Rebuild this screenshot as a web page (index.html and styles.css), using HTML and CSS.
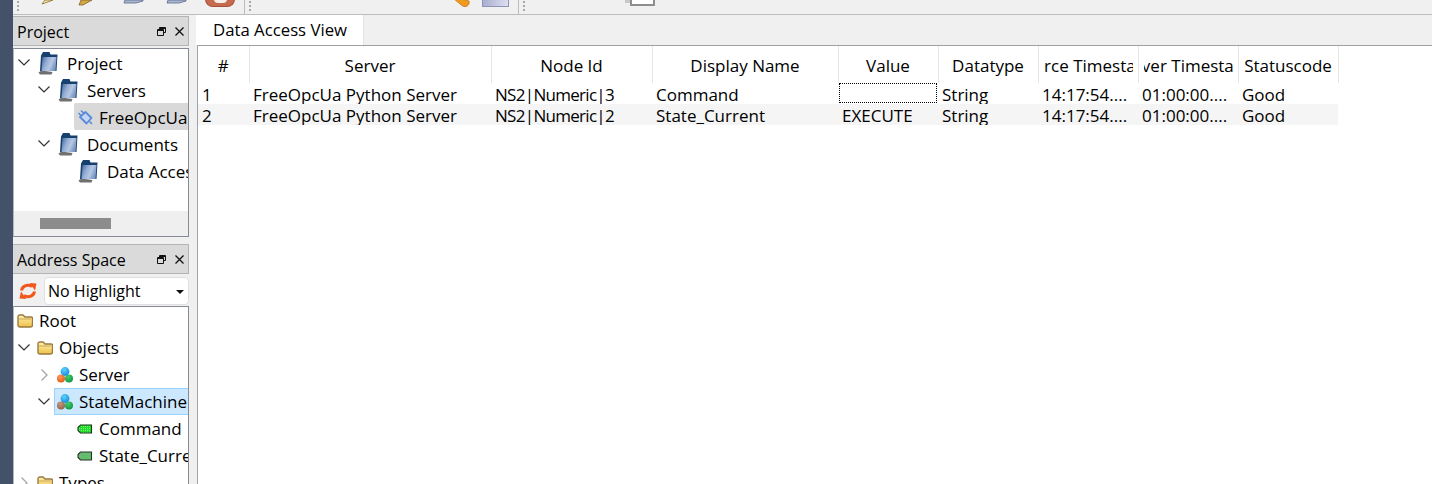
FILE: index.html
```html
<!DOCTYPE html>
<html lang="en">
<head>
    <meta charset="UTF-8">
    <title>Data Access View</title>
    <link rel="stylesheet" href="styles.css">
</head>
<body>
    <svg class="defs" width="0" height="0">
        <defs>
            <linearGradient id="bookFill" x1="0" y1="0" x2="1" y2="0.4">
                <stop offset="0" stop-color="#3f6396"/>
                <stop offset="0.4" stop-color="#92acd3"/>
                <stop offset="0.7" stop-color="#b6c8e4"/>
                <stop offset="1" stop-color="#7d99c4"/>
            </linearGradient>
            <linearGradient id="folderFill" x1="0" y1="0" x2="0" y2="1">
                <stop offset="0" stop-color="#fff3b0"/>
                <stop offset="1" stop-color="#eec04a"/>
            </linearGradient>
            <radialGradient id="ballBlue" cx="0.4" cy="0.3" r="0.8">
                <stop offset="0" stop-color="#5fd0ff"/>
                <stop offset="1" stop-color="#0a86d8"/>
            </radialGradient>
            <radialGradient id="ballOrange" cx="0.4" cy="0.3" r="0.8">
                <stop offset="0" stop-color="#ff9a55"/>
                <stop offset="1" stop-color="#e2500f"/>
            </radialGradient>
            <radialGradient id="ballGreen" cx="0.4" cy="0.3" r="0.8">
                <stop offset="0" stop-color="#3fd070"/>
                <stop offset="1" stop-color="#0c8f3c"/>
            </radialGradient>
            <radialGradient id="ballBrown" cx="0.4" cy="0.3" r="0.8">
                <stop offset="0" stop-color="#c49680"/>
                <stop offset="1" stop-color="#8f5e48"/>
            </radialGradient>
            <pattern id="checkGreen" width="2" height="2" patternUnits="userSpaceOnUse">
                <rect width="2" height="2" fill="#1fdc28"/>
                <rect width="1" height="1" fill="#7cf07f"/>
            </pattern>
            <pattern id="checkGrey" width="2" height="2" patternUnits="userSpaceOnUse">
                <rect width="2" height="2" fill="#59c866"/>
                <rect width="1" height="1" fill="#8d968e"/>
            </pattern>
            <symbol id="book" viewBox="0 0 20 24">
                <path d="M0.500 21.500l3-2 11 1.500-1 2.500H2z" fill="#333" opacity="0.7"/>
                <path d="M3 4.500L5 1h6.500l1 2.500H19.500L18.500 20H2z" fill="#17406f"/>
                <path d="M4.500 6h14L17.500 20H3.500z" fill="url(#bookFill)"/>
            </symbol>
            <symbol id="plug" viewBox="0 0 16 16">
                <path d="M8.500 3L14.500 9 9.500 14.500 3 8z" fill="#c3d6f6" stroke="#5a8ada" stroke-width="1.800" stroke-linejoin="round"/>
                <path d="M7 4.500L4 1.500M4.500 7L1.500 4M12.500 12.500L15 15" stroke="#5a8ada" stroke-width="1.600" fill="none"/>
            </symbol>
            <symbol id="folder" viewBox="0 0 16 14">
                <path d="M1 3q0-2 2-2h3l2 2h6q1.500 0 1.500 1.500V11q0 2-2 2H3q-2 0-2-2z" fill="url(#folderFill)" stroke="#9b7a3f" stroke-width="1.400"/>
                <path d="M2 5h12" stroke="#c9a556" stroke-width="1"/>
            </symbol>
            <symbol id="cluster" viewBox="0 0 16 16">
                <circle cx="4" cy="11.500" r="4" fill="url(#ballOrange)"/>
                <circle cx="12" cy="11.500" r="4" fill="url(#ballGreen)"/>
                <circle cx="8" cy="4.500" r="4.400" fill="url(#ballBlue)"/>
            </symbol>
            <symbol id="clusterDim" viewBox="0 0 16 16">
                <circle cx="4" cy="11.500" r="4" fill="url(#ballBrown)"/>
                <circle cx="12" cy="11.500" r="4" fill="url(#ballGreen)"/>
                <circle cx="8" cy="4.500" r="4.400" fill="url(#ballBlue)"/>
            </symbol>
            <symbol id="tag" viewBox="0 0 16 10">
                <path d="M1 3.500L3.500 1h11v8h-11L1 6.500z" fill="url(#checkGreen)" stroke="#17391a" stroke-width="1.100"/>
            </symbol>
            <symbol id="tagDim" viewBox="0 0 16 10">
                <path d="M1 3.500L3.500 1h11v8h-11L1 6.500z" fill="url(#checkGrey)" stroke="#2b332c" stroke-width="1.100"/>
            </symbol>
            <symbol id="chevDown" viewBox="0 0 12 7">
                <path d="M0.500 0.500L6 6l5.500-5.500" fill="none" stroke="#333" stroke-width="1.200"/>
            </symbol>
            <symbol id="chevRight" viewBox="0 0 7 12">
                <path d="M0.500 0.500L6 6l-5.500 5.500" fill="none" stroke="#a6a6a6" stroke-width="1.300"/>
            </symbol>
            <symbol id="floatBtn" viewBox="0 0 9 9">
                <path d="M2.500 2.500V0.500h6v5h-2M0.500 2.500h6v6h-6z" fill="none" stroke="#111" stroke-width="1"/>
                <path d="M0.500 3.500h6M2.500 1.500h6" stroke="#111" stroke-width="1"/>
            </symbol>
            <symbol id="closeBtn" viewBox="0 0 9 9">
                <path d="M0.500 0.500l8 8M8.500 0.500l-8 8" stroke="#111" stroke-width="1.300"/>
            </symbol>
        </defs>
    </svg>

    <div class="edge"></div>
    <div class="app">
        <div class="toolbar">
            <span class="grip grip-first"></span>
            <svg class="tool tool-pen" viewBox="0 0 11 4"><path d="M0 4l3-1 8-3H3z" fill="#f6e7b4" stroke="#8a6a2a" stroke-width="0.800"/></svg>
            <svg class="tool tool-pen2" viewBox="0 0 13 5"><path d="M0 5h4l9-5H2z" fill="#d6a73e" stroke="#7b6231" stroke-width="0.800"/></svg>
            <svg class="tool tool-doc" viewBox="0 0 19 3"><path d="M0 3h12l7-2V0H1z" fill="#a9b6d0" stroke="#5a6a8e" stroke-width="0.800"/></svg>
            <svg class="tool tool-doc2" viewBox="0 0 19 3"><path d="M0 3h12l7-2V0H1z" fill="#a9b6d0" stroke="#5a6a8e" stroke-width="0.800"/></svg>
            <span class="tool-stop"></span>
            <span class="tool-sep"></span>
            <span class="grip"></span>
            <svg class="tool tool-tag" viewBox="0 0 16 8"><path d="M0 0h8l7 2q1 4-3 5.500-2.500 0.500-4-1z" fill="#f09a1e" stroke="#c9751a" stroke-width="0.800"/></svg>
            <span class="tool-box"></span>
            <span class="tool-sep tool-sep-wide"></span>
            <span class="grip"></span>
            <span class="tool-page"></span>
        </div>

        <div class="workspace">
            <div class="docks">
                <section class="dock dock-project">
                    <header class="dock-title">
                        <span class="dock-name">Project</span>
                        <svg class="dock-btn"><use href="#floatBtn"/></svg>
                        <svg class="dock-btn"><use href="#closeBtn"/></svg>
                    </header>
                    <div class="tree tree-project">
                        <div class="tree-rows">
                            <div class="row">
                                <span class="expander"><svg class="chev"><use href="#chevDown"/></svg></span>
                                <span class="item item-book"><svg class="ico-book"><use href="#book"/></svg>Project</span>
                            </div>
                            <div class="row level-1">
                                <span class="expander"><svg class="chev"><use href="#chevDown"/></svg></span>
                                <span class="item item-book"><svg class="ico-book"><use href="#book"/></svg>Servers</span>
                            </div>
                            <div class="row level-2">
                                <span class="expander"></span>
                                <span class="item item-current"><svg class="ico"><use href="#plug"/></svg>FreeOpcUa Python Server</span>
                            </div>
                            <div class="row level-1">
                                <span class="expander"><svg class="chev"><use href="#chevDown"/></svg></span>
                                <span class="item item-book"><svg class="ico-book"><use href="#book"/></svg>Documents</span>
                            </div>
                            <div class="row level-2">
                                <span class="expander"></span>
                                <span class="item item-book"><svg class="ico-book"><use href="#book"/></svg>Data Access View</span>
                            </div>
                        </div>
                        <div class="hscroll"><span class="hscroll-thumb"></span></div>
                    </div>
                </section>

                <section class="dock dock-address">
                    <header class="dock-title">
                        <span class="dock-name">Address Space</span>
                        <svg class="dock-btn"><use href="#floatBtn"/></svg>
                        <svg class="dock-btn"><use href="#closeBtn"/></svg>
                    </header>
                    <div class="highlight-bar">
                        <svg class="refresh" viewBox="0 0 18 16">
                            <path d="M2.500 7.500C3 3.500 8 0.500 13 3.500" fill="none" stroke="#f0591a" stroke-width="3"/>
                            <path d="M10.500 0l7 0.500-1.500 7z" fill="#f0591a"/>
                            <path d="M15.500 8.500C15 12.500 10 15.500 5 12.500" fill="none" stroke="#f0591a" stroke-width="3"/>
                            <path d="M7.500 16l-7-0.500 1.500-7z" fill="#f0591a"/>
                        </svg>
                        <div class="combo">No Highlight<span class="combo-arrow"></span></div>
                    </div>
                    <div class="tree tree-address">
                        <div class="row">
                            <span class="item"><svg class="ico ico-folder"><use href="#folder"/></svg>Root</span>
                        </div>
                        <div class="row">
                            <span class="expander"><svg class="chev"><use href="#chevDown"/></svg></span>
                            <span class="item"><svg class="ico ico-folder"><use href="#folder"/></svg>Objects</span>
                        </div>
                        <div class="row level-1">
                            <span class="expander"><svg class="chev-right"><use href="#chevRight"/></svg></span>
                            <span class="item"><svg class="ico"><use href="#cluster"/></svg>Server</span>
                        </div>
                        <div class="row level-1">
                            <span class="expander"><svg class="chev"><use href="#chevDown"/></svg></span>
                            <span class="item item-selected"><svg class="ico"><use href="#clusterDim"/></svg>StateMachine</span>
                        </div>
                        <div class="row level-2">
                            <span class="expander"></span>
                            <span class="item"><svg class="ico ico-tag"><use href="#tag"/></svg>Command</span>
                        </div>
                        <div class="row level-2">
                            <span class="expander"></span>
                            <span class="item"><svg class="ico ico-tag"><use href="#tagDim"/></svg>State_Current</span>
                        </div>
                        <div class="row">
                            <span class="expander"><svg class="chev-right"><use href="#chevRight"/></svg></span>
                            <span class="item"><svg class="ico ico-folder"><use href="#folder"/></svg>Types</span>
                        </div>
                    </div>
                </section>
            </div>

            <main class="main">
                <div class="tabs">
                    <div class="tab">Data Access View</div>
                </div>
                <div class="view">
                    <table class="grid">
                        <colgroup>
                            <col class="col-num">
                            <col class="col-server">
                            <col class="col-node">
                            <col class="col-name">
                            <col class="col-std">
                            <col class="col-std">
                            <col class="col-std">
                            <col class="col-std">
                            <col class="col-std">
                        </colgroup>
                        <thead>
                            <tr>
                                <th><div class="th-label">#</div></th>
                                <th><div class="th-label">Server</div></th>
                                <th><div class="th-label">Node Id</div></th>
                                <th><div class="th-label">Display Name</div></th>
                                <th><div class="th-label">Value</div></th>
                                <th><div class="th-label">Datatype</div></th>
                                <th><div class="th-label">Source Timestamp</div></th>
                                <th><div class="th-label">Server Timestamp</div></th>
                                <th><div class="th-label">Statuscode</div></th>
                            </tr>
                        </thead>
                        <tbody>
                            <tr>
                                <td>1</td>
                                <td>FreeOpcUa Python Server</td>
                                <td class="node-id">NS2|Numeric|3</td>
                                <td>Command</td>
                                <td class="focus"></td>
                                <td>String</td>
                                <td>14:17:54....</td>
                                <td>01:00:00....</td>
                                <td>Good</td>
                            </tr>
                            <tr class="alt">
                                <td>2</td>
                                <td>FreeOpcUa Python Server</td>
                                <td class="node-id">NS2|Numeric|2</td>
                                <td>State_Current</td>
                                <td>EXECUTE</td>
                                <td>String</td>
                                <td>14:17:54....</td>
                                <td>01:00:00....</td>
                                <td>Good</td>
                            </tr>
                        </tbody>
                    </table>
                </div>
            </main>
        </div>
    </div>
</body>
</html>
```

FILE: styles.css
```css
html, body {
    height: 100%;
}

body {
    margin: 0;
    display: flex;
    overflow: hidden;
    background-color: #f0f0f0;
    color: #000;
    font-family: "Open Sans", "Noto Sans", sans-serif;
    font-size: 17px;
}

.defs {
    position: absolute;
}

.edge {
    width: 13px;
    flex: none;
    background-color: #435269;
}

.app {
    flex: 1;
    min-width: 0;
    display: flex;
    flex-direction: column;
}

/* toolbar, only the bottom of it is on screen */
.toolbar {
    height: 14px;
    flex: none;
    display: flex;
    align-items: flex-end;
    overflow: hidden;
    border-bottom: 1px solid #bdbdbd;
}

.grip {
    width: 2px;
    height: 12px;
    margin: 0 0 1px 4px;
    flex: none;
    background-image: linear-gradient(#a8a8a8 50%, transparent 50%);
    background-size: 2px 4px;
}

.grip-first {
    margin-left: 4px;
}

.tool {
    flex: none;
    overflow: visible;
}

.tool-pen {
    width: 11px;
    height: 4px;
    margin: 0 0 10px 23px;
}

.tool-pen2 {
    width: 13px;
    height: 5px;
    margin: 0 0 9px 26px;
}

.tool-doc {
    width: 19px;
    height: 3px;
    margin: 0 0 11px 32px;
}

.tool-doc2 {
    width: 19px;
    height: 3px;
    margin: 0 0 11px 24px;
}

.tool-stop {
    width: 30px;
    height: 12px;
    margin: 0 0 7px 19px;
    flex: none;
    display: flex;
    justify-content: center;
    align-items: flex-end;
    padding-bottom: 3px;
    box-sizing: border-box;
    background-color: #c66a50;
    border: 1px solid #a9503a;
    border-top: 0;
    border-radius: 0 0 8px 8px;
}

.tool-stop::after {
    content: "";
    width: 13px;
    height: 6px;
    background-color: #f7efe9;
    border-radius: 0 0 4px 4px;
}

.tool-sep {
    width: 1px;
    height: 14px;
    margin-left: 9px;
    flex: none;
    background-color: #bdbdbd;
}

.tool-sep-wide {
    margin-left: 9px;
}

.tool-tag {
    width: 16px;
    height: 8px;
    margin: 0 0 7px 203px;
}

.tool-box {
    width: 27px;
    height: 8px;
    margin: 0 0 7px 12px;
    flex: none;
    background: linear-gradient(100deg, #a8acd0, #dfe0ee);
    border: 1px solid #8f93b8;
    border-top: 0;
    box-sizing: border-box;
}

.tool-page {
    width: 25px;
    height: 8px;
    margin: 0 0 8px 105px;
    flex: none;
    box-sizing: border-box;
    background-color: #fff;
    border: 2px solid #8e8e8e;
    border-top: 0;
    box-shadow: -6px -2px 0 -1px #c8c8c8;
}

.workspace {
    flex: 1;
    min-height: 0;
    display: flex;
}

/* left docks */
.docks {
    width: 176px;
    flex: none;
    display: flex;
    flex-direction: column;
    padding-top: 1px;
    gap: 7px;
}

.dock {
    display: flex;
    flex-direction: column;
    min-height: 0;
}

.dock-address {
    flex: 1;
}

.dock-title {
    height: 28px;
    flex: none;
    display: flex;
    align-items: center;
    gap: 9px;
    padding: 0 4px;
    background-color: #dadada;
    border: 1px solid #b4b4b4;
    border-left: 0;
    font-size: 16px;
}

.dock-name {
    flex: 1;
    padding-top: 2px;
}

.dock-btn {
    width: 9px;
    height: 9px;
    flex: none;
}

.tree {
    box-sizing: border-box;
    overflow: hidden;
    background-color: #fff;
    border: 1px solid #858a96;
    border-left-color: #b4b8c0;
}

.tree-project {
    height: 189px;
    margin-top: 2px;
    display: flex;
    flex-direction: column;
}

.tree-rows {
    flex: 1;
    min-height: 0;
}

.tree-address {
    flex: 1;
    min-height: 0;
    border-bottom: 0;
}

.row {
    height: 27px;
    display: flex;
    white-space: nowrap;
}

.level-1 {
    padding-left: 20px;
}

.level-2 {
    padding-left: 40px;
}

.expander {
    width: 20px;
    flex: none;
    display: flex;
    align-items: center;
    justify-content: center;
}

.chev {
    width: 12px;
    height: 7px;
    margin-left: -1px;
}

.chev-right {
    width: 7px;
    height: 12px;
}

.item {
    flex: 1;
    display: flex;
    align-items: center;
    gap: 6px;
    padding-left: 3px;
}

/* project tree text sits a pixel under the middle of the row, the icon does not */
.tree-project .item {
    padding-top: 2px;
}

.tree-project .item svg {
    margin-top: -2px;
}

.item-book {
    gap: 9px;
    padding-left: 4px;
}

.item-current {
    background-color: #d9d9d9;
    border-radius: 2px 0 0 2px;
}

.item-selected {
    margin-right: -1px;
    background-color: #cce8ff;
    border: 1px solid #99d1ff;
    border-right: 0;
    padding-left: 2px;
}

.ico {
    width: 16px;
    height: 16px;
    flex: none;
}

.ico-folder {
    height: 14px;
}

.ico-tag {
    height: 10px;
}

.ico-book {
    width: 20px;
    height: 24px;
    flex: none;
}

.hscroll {
    height: 25px;
    flex: none;
    display: flex;
    align-items: center;
    padding-left: 26px;
    background-color: #efefef;
}

.hscroll-thumb {
    width: 71px;
    height: 11px;
    background-color: #8c8c8c;
}

.highlight-bar {
    height: 30px;
    flex: none;
    margin-top: 2px;
    display: flex;
    align-items: center;
}

.refresh {
    width: 18px;
    height: 16px;
    margin-left: 6px;
    flex: none;
}

.combo {
    flex: 1;
    height: 28px;
    margin-left: 7px;
    padding-left: 3px;
    box-sizing: border-box;
    position: relative;
    display: flex;
    align-items: center;
    background-color: #fff;
    border: 1px solid #e0e0e0;
    border-radius: 4px;
    font-size: 16px;
}

.combo-arrow {
    position: absolute;
    right: 4px;
    top: 12px;
    border-left: 4px solid transparent;
    border-right: 4px solid transparent;
    border-top: 4px solid #111;
}

/* main area */
.main {
    flex: 1;
    min-width: 0;
    margin-left: 8px;
    display: flex;
    flex-direction: column;
}

.tabs {
    height: 30px;
    flex: none;
    display: flex;
}

.tab {
    width: 168px;
    margin-left: -1px;
    padding: 0 0 2px 17px;
    box-sizing: border-box;
    display: flex;
    align-items: center;
    background-color: #fff;
    border-right: 1px solid #e4e4e4;
    font-size: 16.75px;
}

.view {
    flex: 1;
    background-color: #fff;
    border-top: 1px solid #a0a0a0;
    border-left: 1px solid #a0a3ab;
}

.grid {
    width: 1140px;
    table-layout: fixed;
    border-collapse: collapse;
}

.col-num {
    width: 51px;
}

.col-server {
    width: 242px;
}

.col-node {
    width: 161px;
}

.col-name {
    width: 186px;
}

.col-std {
    width: 100px;
}

th {
    height: 36px;
    padding: 4px 0 0;
    box-sizing: border-box;
    font-weight: normal;
    border-right: 1px solid #e6e6e6;
}

.th-label {
    margin: 0 5px;
    display: flex;
    justify-content: center;
    overflow: hidden;
    white-space: nowrap;
}

tbody tr:first-child td {
    border-top: 1px solid #fff;
}

td {
    height: 21px;
    padding: 2px 4px 0;
    box-sizing: border-box;
    overflow: hidden;
    white-space: nowrap;
    line-height: 19px;
}

.node-id {
    letter-spacing: -0.7px;
}

.alt td {
    background-color: #f5f5f5;
}

.focus {
    outline: 1px dotted #000;
    outline-offset: -2px;
}
```
